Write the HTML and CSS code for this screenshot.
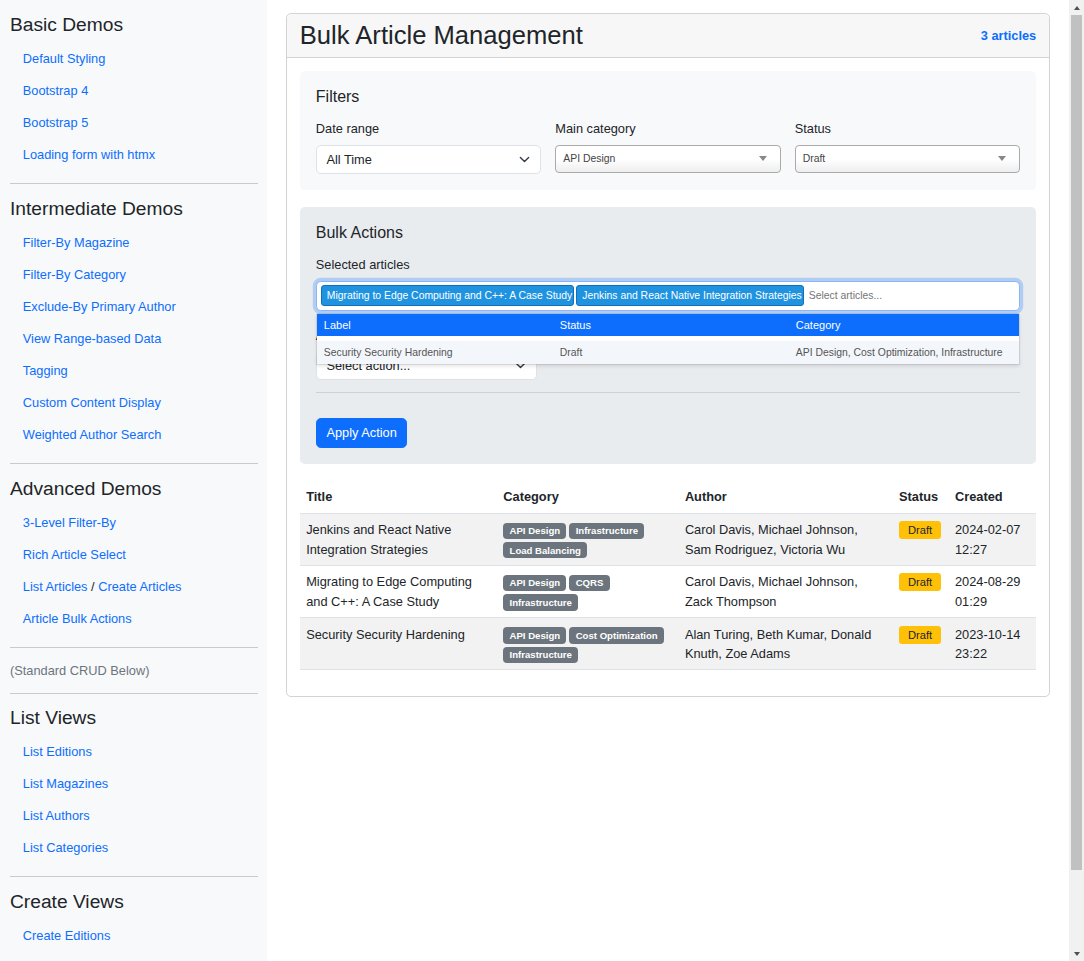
FILE: index.html
```html
<!DOCTYPE html>
<html lang="en">
<head>
<meta charset="utf-8">
<title>Bulk Article Management</title>
<link rel="stylesheet" href="styles.css">
</head>
<body>
<div class="layout">
  <nav class="sidebar">
    <h4 class="side-title">Basic Demos</h4>
    <ul class="side-nav">
      <li><a href="#">Default Styling</a></li>
      <li><a href="#">Bootstrap 4</a></li>
      <li><a href="#">Bootstrap 5</a></li>
      <li><a href="#">Loading form with htmx</a></li>
    </ul>
    <hr class="side-hr">
    <h4 class="side-title">Intermediate Demos</h4>
    <ul class="side-nav">
      <li><a href="#">Filter-By Magazine</a></li>
      <li><a href="#">Filter-By Category</a></li>
      <li><a href="#">Exclude-By Primary Author</a></li>
      <li><a href="#">View Range-based Data</a></li>
      <li><a href="#">Tagging</a></li>
      <li><a href="#">Custom Content Display</a></li>
      <li><a href="#">Weighted Author Search</a></li>
    </ul>
    <hr class="side-hr">
    <h4 class="side-title">Advanced Demos</h4>
    <ul class="side-nav">
      <li><a href="#">3-Level Filter-By</a></li>
      <li><a href="#">Rich Article Select</a></li>
      <li><a href="#">List Articles</a> / <a href="#">Create Articles</a></li>
      <li><a href="#">Article Bulk Actions</a></li>
    </ul>
    <hr class="side-hr">
    <p class="side-note">(Standard CRUD Below)</p>
    <hr class="side-hr">
    <h4 class="side-title">List Views</h4>
    <ul class="side-nav">
      <li><a href="#">List Editions</a></li>
      <li><a href="#">List Magazines</a></li>
      <li><a href="#">List Authors</a></li>
      <li><a href="#">List Categories</a></li>
    </ul>
    <hr class="side-hr">
    <h4 class="side-title">Create Views</h4>
    <ul class="side-nav">
      <li><a href="#">Create Editions</a></li>
      <li><a href="#">Create Magazines</a></li>
      <li><a href="#">Create Authors</a></li>
      <li><a href="#">Create Categories</a></li>
    </ul>
  </nav>

  <main class="main">
    <section class="card">
      <header class="card-header">
        <h2 class="card-title">Bulk Article Management</h2>
        <span class="count">3 articles</span>
      </header>
      <div class="card-body">
        <div class="panel panel-filters">
          <h5 class="panel-title">Filters</h5>
          <div class="filter-grid">
            <div class="field">
              <label class="field-label">Date range</label>
              <div class="form-select">
                <span>All Time</span>
                <svg class="chev" width="11" height="11" viewBox="0 0 16 16"><path d="m2 5 6 6 6-6" fill="none" stroke="#343a40" stroke-width="2" stroke-linecap="round" stroke-linejoin="round"/></svg>
              </div>
            </div>
            <div class="field">
              <label class="field-label">Main category</label>
              <div class="s2">
                <span>API Design</span>
                <span class="s2-arrow"></span>
              </div>
            </div>
            <div class="field">
              <label class="field-label">Status</label>
              <div class="s2">
                <span>Draft</span>
                <span class="s2-arrow"></span>
              </div>
            </div>
          </div>
        </div>

        <div class="panel panel-bulk">
          <h5 class="panel-title">Bulk Actions</h5>
          <label class="field-label">Selected articles</label>
          <div class="multi">
            <span class="tag">Migrating to Edge Computing and C++: A Case Study</span>
            <span class="tag">Jenkins and React Native Integration Strategies</span>
            <span class="placeholder">Select articles...</span>
            <div class="dropdown">
              <div class="dd-head">
                <span>Label</span><span>Status</span><span>Category</span>
              </div>
              <div class="dd-body">
                <div class="dd-row">
                  <span>Security Security Hardening</span><span>Draft</span><span>API Design, Cost Optimization, Infrastructure</span>
                </div>
              </div>
            </div>
          </div>
          <div class="action-field">
            <label class="field-label">Action</label>
            <div class="form-select action-select">
              <span>Select action...</span>
              <svg class="chev" width="11" height="11" viewBox="0 0 16 16"><path d="m2 5 6 6 6-6" fill="none" stroke="#343a40" stroke-width="2" stroke-linecap="round" stroke-linejoin="round"/></svg>
            </div>
          </div>
          <hr class="bulk-hr">
          <button class="btn" type="button">Apply Action</button>
        </div>

        <table class="articles">
          <colgroup>
            <col class="c-title"><col class="c-cat"><col class="c-author"><col class="c-status"><col class="c-created">
          </colgroup>
          <thead>
            <tr><th>Title</th><th>Category</th><th>Author</th><th>Status</th><th>Created</th></tr>
          </thead>
          <tbody>
            <tr>
              <td>Jenkins and React Native Integration Strategies</td>
              <td><span class="cat">API Design</span><span class="cat">Infrastructure</span><span class="cat">Load Balancing</span></td>
              <td>Carol Davis, Michael Johnson, Sam Rodriguez, Victoria Wu</td>
              <td><span class="draft">Draft</span></td>
              <td>2024-02-07 12:27</td>
            </tr>
            <tr>
              <td>Migrating to Edge Computing and C++: A Case Study</td>
              <td><span class="cat">API Design</span><span class="cat">CQRS</span><span class="cat">Infrastructure</span></td>
              <td>Carol Davis, Michael Johnson, Zack Thompson</td>
              <td><span class="draft">Draft</span></td>
              <td>2024-08-29 01:29</td>
            </tr>
            <tr>
              <td>Security Security Hardening</td>
              <td><span class="cat">API Design</span><span class="cat">Cost Optimization</span><span class="cat">Infrastructure</span></td>
              <td>Alan Turing, Beth Kumar, Donald Knuth, Zoe Adams</td>
              <td><span class="draft">Draft</span></td>
              <td>2023-10-14 23:22</td>
            </tr>
          </tbody>
        </table>
      </div>
    </section>
  </main>
</div>

<div class="scrollbar" aria-hidden="true">
  <span class="sb-btn sb-up"></span>
  <span class="sb-track"><span class="sb-thumb"></span></span>
  <span class="sb-btn sb-down"></span>
</div>
</body>
</html>
```

FILE: styles.css
```css
* { box-sizing: border-box; }
html, body { margin: 0; padding: 0; }

body {
  font-family: "Liberation Sans", Arial, sans-serif;
  font-size: 12.8px;
  line-height: 1.5;
  color: #212529;
  background: #fff;
}
a { color: #0d6efd; text-decoration: none; }

.layout { display: flex; align-items: stretch; width: 1069px; }

/* Sidebar */
.sidebar {
  flex: 0 0 267px;
  width: 267px;
  background: #f8f9fa;
  padding: 12.9px 9px 0 10px;
}
.side-title {
  font-size: 19.2px;
  font-weight: 400;
  line-height: 1.2;
  margin: 0 0 6.7px;
}
.side-nav { list-style: none; margin: 0; padding: 0; }
.side-nav li { padding: 6.4px 12.8px; line-height: 19.2px; }
.side-hr {
  border: 0;
  border-top: 1px solid #c9cacb;
  height: 0;
  margin: 12.65px 0;
}
.side-note { margin: 0; color: #6c757d; line-height: 19.2px; }

/* Main */
.main { flex: 1; min-width: 0; padding: 12.8px 19px; }
.card {
  border: 1px solid #d3d3d3;
  border-radius: 5px;
  background: #fff;
}
.card-header {
  display: flex;
  align-items: center;
  justify-content: space-between;
  padding: 6.4px 12.8px;
  background: #f7f7f7;
  border-bottom: 1px solid #d3d3d3;
  border-radius: 5px 5px 0 0;
}
.card-title {
  margin: 0;
  font-size: 25.6px;
  line-height: 1.2;
  font-weight: 400;
}
.count { color: #0d6efd; font-weight: 700; }
.card-body { padding: 12.8px; }

/* Panels */
.panel { padding: 16px; border-radius: 4.8px; }
.panel-filters { background: #f8f9fa; margin-bottom: 17px; }
.panel-bulk { background: #e9ecef; margin-bottom: 16.5px; }
.panel-title {
  margin: 0 0 13px;
  font-size: 16px;
  line-height: 1.2;
  font-weight: 400;
}
.field-label { display: block; line-height: 19.2px; margin-bottom: 6.4px; }
.filter-grid {
  display: grid;
  grid-template-columns: repeat(3, 1fr);
  column-gap: 14px;
}

.form-select {
  display: flex;
  align-items: center;
  justify-content: space-between;
  height: 29px;
  padding: 0 10px 0 9.6px;
  border: 1px solid #dee2e6;
  border-radius: 4.8px;
  background: #fff;
  color: #212529;
}
.chev { display: block; flex: 0 0 auto; }

.s2 {
  display: flex;
  align-items: center;
  justify-content: space-between;
  height: 28px;
  padding: 0 13px 0 7px;
  border: 1px solid #aaa;
  border-radius: 4px;
  background: linear-gradient(to bottom, #fff 50%, #eee 100%);
  color: #444;
  font-size: 10.4px;
  line-height: 1;
}
.s2-arrow {
  width: 0;
  height: 0;
  border-style: solid;
  border-width: 5px 4px 0 4px;
  border-color: #888 transparent transparent transparent;
}

/* Multi select */
.multi {
  position: relative;
  display: flex;
  align-items: center;
  gap: 2px;
  height: 30px;
  padding: 0 4px;
  border: 1px solid #86b7fe;
  border-radius: 4.8px;
  background: #fff;
  box-shadow: 0 0 0 3.2px rgba(13, 110, 253, .25);
}
.tag {
  height: 21px;
  line-height: 19px;
  padding: 0 1px 0 5px;
  font-size: 10.4px;
  color: #fff;
  background: #1f93e0;
  border: 1px solid #1270b8;
  border-radius: 3px;
  white-space: nowrap;
}
.placeholder {
  margin-left: 3px;
  font-size: 10.4px;
  color: #757575;
  white-space: nowrap;
}
.dropdown {
  position: absolute;
  top: calc(100% + 4px);
  left: 0;
  right: 0;
  z-index: 10;
  background: #fff;
  box-shadow: 0 0 0 1px rgba(0, 0, 0, .08), 0 2px 4px rgba(0, 0, 0, .12);
}
.dd-head, .dd-row {
  display: grid;
  grid-template-columns: 236px 236px 1fr;
}
.dd-head span, .dd-row span { padding-left: 7px; white-space: nowrap; }
.dd-head {
  height: 22px;
  line-height: 22px;
  background: #0d6efd;
  color: #fff;
  font-size: 11px;
}
.dd-body { padding-top: 5px; }
.dd-row {
  height: 23px;
  line-height: 23px;
  background: #f3f7fb;
  color: #555;
  font-size: 10.4px;
}

.action-field { margin-top: 15px; }
.action-select { width: 221px; }
.bulk-hr {
  border: 0;
  border-top: 1px solid #cdd0d4;
  height: 0;
  margin: 11.4px 0 25px;
}
.btn {
  display: inline-block;
  font-family: inherit;
  font-size: 12.8px;
  line-height: 19.2px;
  padding: 4.8px 9.6px;
  color: #fff;
  background: #0d6efd;
  border: 1px solid #0d6efd;
  border-radius: 4.8px;
}

/* Table */
.articles {
  width: 100%;
  border-collapse: collapse;
  table-layout: fixed;
  margin-bottom: 12.8px;
}
.c-title { width: 197px; }
.c-cat { width: 181.5px; }
.c-author { width: 214px; }
.c-status { width: 56px; }
.c-created { width: 87.5px; }
.articles th, .articles td {
  padding: 6.4px;
  text-align: left;
  vertical-align: top;
  line-height: 19.2px;
  border-bottom: 1px solid #dee2e6;
}
.articles th { font-weight: 700; }
.articles tbody tr:nth-child(odd) td { background: #f2f2f2; }

.cat {
  display: inline-block;
  margin-right: 3px;
  padding: 3.36px 6.24px;
  font-size: 9.6px;
  font-weight: 700;
  line-height: 1;
  color: #fff;
  background: #6c757d;
  border-radius: 4px;
  white-space: nowrap;
}
.draft {
  display: inline-block;
  vertical-align: top;
  margin-top: 1px;
  height: 18px;
  line-height: 18px;
  padding: 0 9px;
  font-size: 11.2px;
  color: #212529;
  background: #ffc107;
  border-radius: 3.2px;
}

/* Browser scrollbar (overlay at the window's right edge) */
.scrollbar {
  position: fixed;
  top: 0;
  right: 0;
  width: 15px;
  height: 100vh;
  display: flex;
  flex-direction: column;
  background: #f1f1f1;
  z-index: 100;
}
.sb-btn {
  flex: 0 0 15px;
  height: 15px;
  display: flex;
  align-items: center;
  justify-content: center;
}
.sb-btn::before {
  content: "";
  width: 0;
  height: 0;
  border-style: solid;
}
.sb-up::before {
  border-width: 0 3.5px 4px 3.5px;
  border-color: transparent transparent #505050 transparent;
}
.sb-down::before {
  border-width: 4px 3.5px 0 3.5px;
  border-color: #505050 transparent transparent transparent;
}
.sb-track {
  flex: 1;
  padding: 0 2px;
  display: flex;
  flex-direction: column;
}
.sb-thumb {
  height: 855px;
  background: #c1c1c1;
}
```
